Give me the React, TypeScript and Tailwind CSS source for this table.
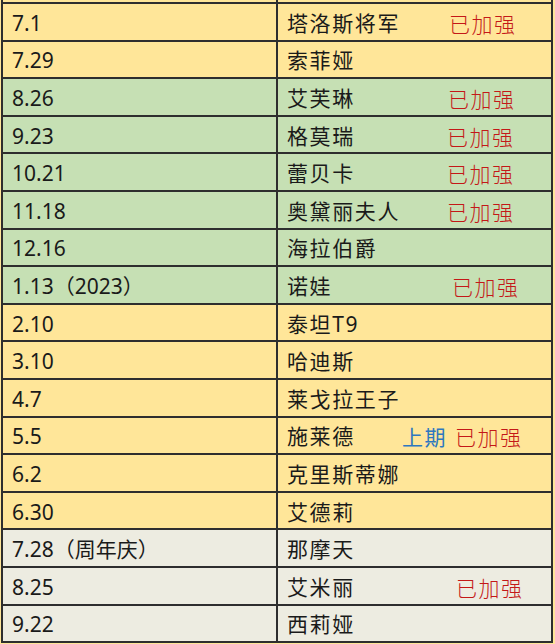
import React from "react";

type Row = {
  date: string;
  name: string;
  bg: string;
  nameW?: string;
  pre?: string;
  note?: boolean;
};

const Y = "bg-[#FFE699]";
const G = "bg-[#C6E0B4]";
const T = "bg-[#EDECE1]";

const rows: Row[] = [
  { date: "7.1", name: "塔洛斯将军", bg: Y, nameW: "w-[162px]", note: true },
  { date: "7.29", name: "索菲娅", bg: Y },
  { date: "8.26", name: "艾芙琳", bg: G, nameW: "w-[161px]", note: true },
  { date: "9.23", name: "格莫瑞", bg: G, nameW: "w-[160px]", note: true },
  { date: "10.21", name: "蕾贝卡", bg: G, nameW: "w-[160px]", note: true },
  { date: "11.18", name: "奥黛丽夫人", bg: G, nameW: "w-[160px]", note: true },
  { date: "12.16", name: "海拉伯爵", bg: G },
  { date: "1.13（2023）", name: "诺娃", bg: G, nameW: "w-[165px]", note: true },
  { date: "2.10", name: "泰坦T9", bg: Y },
  { date: "3.10", name: "哈迪斯", bg: Y },
  { date: "4.7", name: "莱戈拉王子", bg: Y },
  { date: "5.5", name: "施莱德", bg: Y, nameW: "w-[115px]", pre: "上期", note: true },
  { date: "6.2", name: "克里斯蒂娜", bg: Y },
  { date: "6.30", name: "艾德莉", bg: Y },
  { date: "7.28（周年庆）", name: "那摩天", bg: T },
  { date: "8.25", name: "艾米丽", bg: T, nameW: "w-[169px]", note: true },
  { date: "9.22", name: "西莉娅", bg: T },
];

export default function App() {
  return (
    <div
      className="w-[555px] h-[644px] overflow-hidden bg-[#FFE699] text-[#1a1a1a]"
      style={{ fontFamily: '"Noto Sans", "Noto Sans CJK SC", sans-serif' }}
    >
      <div className="ml-[1px] w-[552px] border-l-2 border-r-2 border-[#2e2e2e]">
        <div className="flex h-[2px]">
          <div className="w-[275px] border-r-2 border-[#2e2e2e]" />
          <div className="flex-1" />
        </div>
        {rows.map((r, i) => (
          <div
            key={i}
            className={`flex h-[37.6px] border-t-2 border-[#2e2e2e] ${r.bg} ${
              i === rows.length - 1 ? "h-[39.6px] border-b-2" : ""
            }`}
          >
            <div className="w-[275px] shrink-0 border-r-2 border-[#2e2e2e] pl-[9px] pt-[3px] flex items-center text-[21px] leading-none">
              {r.date}
            </div>
            <div className="flex-1 pl-[9px] pt-[3px] flex items-center text-[21px] leading-none">
              <span className={`${r.nameW ?? ""} shrink-0 tracking-[1.6px]`}>{r.name}</span>
              {r.pre && (
                <span className="text-[#2E78C0] tracking-[1.5px] w-[53px] shrink-0 mt-[2px]">
                  {r.pre}
                </span>
              )}
              {r.note && (
                <span className="text-[#C41818] tracking-[1.5px] font-light mt-[2px]">已加强</span>
              )}
            </div>
          </div>
        ))}
      </div>
    </div>
  );
}
